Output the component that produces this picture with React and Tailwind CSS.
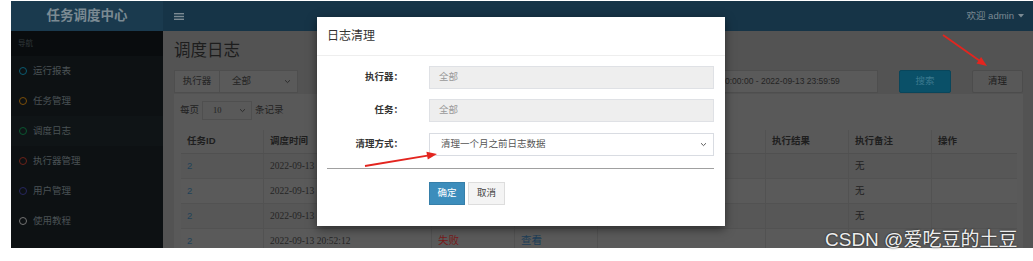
import React from "react";

const menu = [
  { name: "运行报表", ring: "border-[#0b5a70]" },
  { name: "任务管理", ring: "border-[#7a4e0a]" },
  { name: "调度日志", ring: "border-[#0a5530]", active: true },
  { name: "执行器管理", ring: "border-[#6a2219]" },
  { name: "用户管理", ring: "border-[#27275e]" },
  { name: "使用教程", ring: "border-[#727272]" },
];

// columns 3-5 sit under the dialog, so their titles are not drawn
const cols = [
  { title: "任务ID", w: "w-[83px]" },
  { title: "调度时间", w: "w-[168px]" },
  { title: "", w: "w-[83px]" },
  { title: "", w: "w-[83px]" },
  { title: "", w: "w-[168px]" },
  { title: "执行结果", w: "w-[83px]" },
  { title: "执行备注", w: "w-[83px]" },
  { title: "操作", w: "w-[85px]" },
];

const rows = [
  { id: "2", time: "2022-09-13", note: "无" },
  { id: "2", time: "2022-09-13", note: "无" },
  { id: "2", time: "2022-09-13", note: "无" },
  { id: "2", time: "2022-09-13 20:52:12", result: "失败", detail: "查看" },
];

function Chevron({ className }) {
  return (
    <svg viewBox="0 0 10 6" className={className} fill="none" stroke="currentColor" strokeWidth="1.4">
      <path d="M1.5 1.2 L5 4.6 L8.5 1.2" />
    </svg>
  );
}

function Sidebar() {
  return (
    <aside className="w-[152px] shrink-0 bg-[#0d1113]">
      <div className="h-[25px] bg-[#090c0e] pl-[7px] flex items-center text-[7.5px] text-[#30373a]">导航</div>
      {menu.map((m) => (
        <div
          key={m.name}
          className={`h-[30px] flex items-center pl-[8px] gap-[6px] ${m.active ? "bg-[#0f1416]" : ""}`}
        >
          <span className={`w-[8px] h-[8px] rounded-full border-[1.8px] ${m.ring}`} />
          <span className="text-[9.5px] text-[#4a5255]">{m.name}</span>
        </div>
      ))}
    </aside>
  );
}

function FilterRow() {
  return (
    <div className="flex h-[23px] mt-[9px] text-[9.5px] text-[#242424]">
      <div className="w-[124px] flex border border-[#4e4e4e]">
        <div className="w-[45px] flex items-center justify-center bg-[#5a5a5a] border-r border-[#4e4e4e]">执行器</div>
        <div className="flex-1 flex items-center justify-between pl-[12px] pr-[6px] bg-[#5a5a5a]">
          <span>全部</span>
          <Chevron className="w-[7px] h-[5px] text-[#2a2a2a]" />
        </div>
      </div>
      <div className="w-[260px] ml-[20px] flex border border-[#4e4e4e] bg-[#5a5a5a]" />
      <div className="w-[280px] ml-[20px] flex border border-[#4e4e4e]">
        <div className="w-[68px] bg-[#5a5a5a] border-r border-[#4e4e4e]" />
        <div className="flex-1 flex items-center pl-[58px] bg-[#5a5a5a] text-[8.5px] whitespace-nowrap overflow-hidden">
          0:00:00 - 2022-09-13 23:59:59
        </div>
      </div>
      <button className="w-[52px] ml-[21px] bg-[#0a5068] border border-[#09465b] text-[#3c7a8f] rounded-[2px]">搜索</button>
      <button className="w-[51px] ml-[21px] bg-[#585858] border border-[#4c4c4c] text-[#1c1c1c] rounded-[2px]">清理</button>
    </div>
  );
}

function LogTable() {
  return (
    <div className="mt-[10px] text-[9.5px]">
      <div className="flex h-[24px] border-b border-[#505050]">
        {cols.map((c, i) => (
          <div
            key={i}
            className={`${c.w} flex items-center pl-[6px] font-bold text-[#1e1e1e] ${i < cols.length - 1 ? "border-r border-[#525252]" : ""}`}
          >
            {c.title}
          </div>
        ))}
      </div>
      {rows.map((r, ri) => (
        <div key={ri} className={`flex h-[25px] border-b border-[#525252] ${ri % 2 === 0 ? "bg-[#575757]" : "bg-[#5a5a5a]"}`}>
          {cols.map((c, i) => {
            let content = null;
            if (i === 0) content = <span className="text-[#1f4258]">{r.id}</span>;
            if (i === 1)
              content = (
                <span className="font-['Liberation_Serif','Noto_Sans_CJK_SC',serif] text-[#252525] whitespace-nowrap">{r.time}</span>
              );
            if (i === 2 && r.result) content = <span className="text-[#781b1b] text-[10.5px]">{r.result}</span>;
            if (i === 3 && r.detail) content = <span className="text-[#1d3e58] text-[10.5px]">{r.detail}</span>;
            if (i === 6 && r.note) content = <span className="text-[#222]">{r.note}</span>;
            return (
              <div
                key={i}
                className={`${c.w} flex items-center pl-[6px] ${i < cols.length - 1 ? "border-r border-[#525252]" : ""}`}
              >
                {content}
              </div>
            );
          })}
        </div>
      ))}
    </div>
  );
}

function CleanModal() {
  const fieldRow = "flex items-center h-[23px]";
  const label = "w-[92px] -ml-[10px] text-right pr-[6px] font-bold text-[#333]";
  return (
    <div className="absolute left-[317px] top-[17px] w-[408px] h-[209px] bg-white shadow-[0_3px_9px_rgba(0,0,0,0.5)] text-[9.5px]">
      <div className="h-[39px] px-[10px] flex items-center border-b border-[#eeeeee] text-[12px] text-[#333]">日志清理</div>
      <div className="pl-[10px] pr-[11px] pt-[10px]">
        <div className={fieldRow}>
          <div className={label}>执行器：</div>
          <div className="ml-[20px] flex-1 h-full flex items-center pl-[9px] bg-[#eeeeee] border border-[#dfe1e5] text-[#999]">全部</div>
        </div>
        <div className={`${fieldRow} mt-[10px]`}>
          <div className={label}>任务：</div>
          <div className="ml-[20px] flex-1 h-full flex items-center pl-[9px] bg-[#eeeeee] border border-[#dfe1e5] text-[#999]">全部</div>
        </div>
        <div className={`${fieldRow} mt-[11px]`}>
          <div className={label}>清理方式：</div>
          <div className="ml-[20px] flex-1 h-full flex items-center justify-between pl-[11px] pr-[6px] bg-white border border-[#d9dce2] text-[#555]">
            <span>清理一个月之前日志数据</span>
            <Chevron className="w-[7px] h-[5px] text-[#555]" />
          </div>
        </div>
        <div className="mt-[12px] border-t border-[#a0a0a0]" />
        <div className="flex mt-[13px] pl-[102px] gap-[3px]">
          <button className="w-[36px] h-[23px] bg-[#3c8dbc] border border-[#367fa9] text-white">确定</button>
          <button className="w-[37px] h-[23px] bg-[#f4f4f4] border border-[#dddddd] text-[#444]">取消</button>
        </div>
      </div>
    </div>
  );
}

export default function App() {
  return (
    <div className="relative w-[1033px] h-[261px] bg-white overflow-hidden font-['Liberation_Sans','Noto_Sans_CJK_SC',sans-serif]">
      <div className="ml-[11px] mt-px w-[1022px] h-[247px] flex flex-col overflow-hidden">
        <header className="h-[30px] flex shrink-0">
          <div className="w-[152px] bg-[#1a3a4e] flex items-center justify-center text-[13.5px] font-bold text-[#7b8a93]">
            任务调度中心
          </div>
          <div className="flex-1 bg-[#163447] flex items-center justify-between pl-[11px] pr-[9px]">
            <svg viewBox="0 0 10 7" className="w-[10px] h-[7px] text-[#7b8a93]" fill="currentColor">
              <rect x="0" y="0" width="10" height="1.4" />
              <rect x="0" y="2.8" width="10" height="1.4" />
              <rect x="0" y="5.6" width="10" height="1.4" />
            </svg>
            <div className="flex items-center gap-[4px] text-[9.5px] text-[#7b8a93]">
              <span>欢迎 admin</span>
              <svg viewBox="0 0 6 4" className="w-[6px] h-[4px]" fill="currentColor">
                <path d="M0 0 L6 0 L3 3.5 Z" />
              </svg>
            </div>
          </div>
        </header>
        <div className="flex flex-1 min-h-0">
          <Sidebar />
          <main className="flex-1 bg-[#535353] pl-[11px] pr-[10px] pt-[8px]">
            <h1 className="text-[16.5px] leading-[22px] text-[#1d1d1d]">调度日志</h1>
            <FilterRow />
            <section className="mt-px bg-[#595959] h-[200px] pl-[7px] pr-[6px] pt-[7px]">
              <div className="flex items-center gap-[3px] text-[9.5px] text-[#222]">
                <span className="ml-[-1px]">每页</span>
                <div className="w-[50px] h-[19px] flex items-center justify-between pl-[10px] pr-[5px] border border-[#4f4f4f] font-['Liberation_Serif',serif] text-[8.5px]">
                  <span>10</span>
                  <Chevron className="w-[7px] h-[5px] text-[#2a2a2a]" />
                </div>
                <span>条记录</span>
              </div>
              <LogTable />
            </section>
          </main>
        </div>
      </div>

      <CleanModal />

      <svg className="absolute inset-0 pointer-events-none" width="1033" height="261" viewBox="0 0 1033 261">
        <line x1="943" y1="35" x2="980" y2="61" stroke="#e3251f" strokeWidth="1.8" />
        <polygon points="987,66 981.1,56.9 976.5,63.5" fill="#e3251f" />
        <line x1="365" y1="166" x2="429" y2="155.4" stroke="#e3251f" strokeWidth="1.8" />
        <polygon points="437,154 427.8,159.6 426.4,151.7" fill="#e3251f" />
      </svg>

      <div className="absolute left-[825px] top-[230px] text-[19px] leading-none text-[#ededed] whitespace-nowrap [text-shadow:0_0_2px_rgba(0,0,0,0.85)]">
        CSDN @爱吃豆的土豆
      </div>
    </div>
  );
}
